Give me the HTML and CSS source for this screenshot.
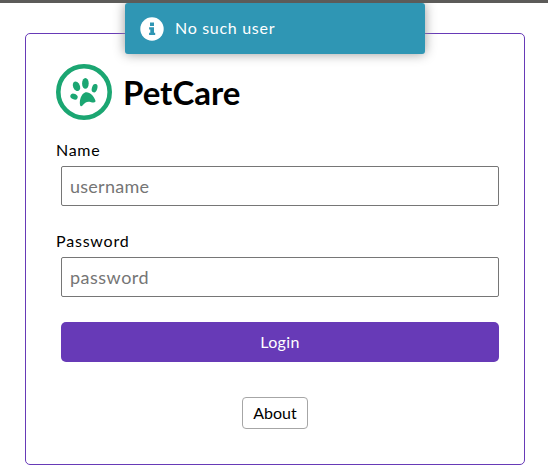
FILE: index.html
```html
<!DOCTYPE html>
<html lang="en">
<head>
<meta charset="utf-8">
<title>PetCare</title>
<link rel="stylesheet" href="styles.css">
</head>
<body>
<main class="card">
  <header class="brand">
    <svg class="logo" viewBox="0 0 56 56" aria-hidden="true">
      <circle cx="28" cy="28" r="25.7" fill="#fff" stroke="#1ba672" stroke-width="4.6"/>
      <g fill="#1ba672">
        <ellipse cx="20.5" cy="22.3" rx="3.4" ry="5" transform="rotate(-24 20.5 22.3)"/>
        <ellipse cx="29.4" cy="19.4" rx="3.3" ry="5.4"/>
        <ellipse cx="38.6" cy="24.2" rx="2.7" ry="4.3" transform="rotate(17 38.6 24.2)"/>
        <ellipse cx="18" cy="32.6" rx="2.8" ry="3.8" transform="rotate(-64 18 32.6)"/>
        <path d="M24 40.8C23.3 36 25.3 30 28.6 28.7C32.7 27 37.9 31.6 39.4 36.6C40 39.2 36.8 38.6 34.4 37.9C30.9 37.1 28.8 38.7 26.5 41.6C25.5 42.8 24.2 42.4 24 40.8Z"/>
      </g>
    </svg>
    <h1 class="title">PetCare</h1>
  </header>
  <form class="form">
    <label class="label" for="name">Name</label>
    <input class="input input-name" id="name" type="text" placeholder="username">
    <label class="label label-password" for="password">Password</label>
    <input class="input input-password" id="password" type="password" placeholder="password">
    <button class="login" type="button">Login</button>
  </form>
  <button class="about" type="button">About</button>
</main>
<div class="toast" role="status">
  <svg class="info" viewBox="0 0 24 24" aria-hidden="true">
    <circle cx="12" cy="12" r="11.7" fill="#fff"/>
    <path fill="#2f96b4" d="M10 5.4h4v3.5h-4zM9.1 10.2h4.9v5.6h1.2v2.2H9.1v-2.2h1.2v-3.4H9.1z"/>
  </svg>
  <span class="toast-text">No such user</span>
</div>
</body>
</html>
```

FILE: styles.css
```css
* { box-sizing: border-box; }

body {
  margin: 0;
  height: 475px;
  padding-top: 30px;
  border-top: 3px solid #5c5b59;
  background: #fff;
  color: #000;
  font-family: Lato, sans-serif;
  font-size: 16px;
  overflow: hidden;
}

.card {
  display: flex;
  flex-direction: column;
  width: 500px;
  height: 432px;
  margin-left: 25px;
  padding: 30px;
  border: 1px solid #673ab7;
  border-radius: 5px;
}

.brand {
  display: flex;
  align-items: center;
  gap: 11px;
  height: 56px;
}

.logo { width: 56px; height: 56px; }

.title {
  margin: 0;
  font-size: 33px;
  line-height: 40px;
  font-weight: 700;
}

.form {
  display: flex;
  flex-direction: column;
  margin-top: 20px;
}

.label { line-height: 20px; letter-spacing: 0.7px; }
.label-password { margin-top: 25px; letter-spacing: 0.8px; }

.input {
  width: 438px;
  height: 40px;
  margin: 6px 0 0 5px;
  padding: 0 8px;
  border: 1px solid #767676;
  border-radius: 2px;
  background: #fff;
  font: inherit;
  font-size: 18px;
}

.input::placeholder { color: #757575; }
.input-name { letter-spacing: 0.25px; }
.input-password { letter-spacing: 0.5px; }

.login {
  width: 438px;
  height: 40px;
  margin: 25px 0 0 5px;
  padding: 0 0 2px;
  border: 0;
  border-radius: 5px;
  background: #673ab7;
  color: #fff;
  font: inherit;
  letter-spacing: 0.3px;
}

.about {
  align-self: center;
  width: 66px;
  height: 32px;
  margin-top: 35px;
  padding: 0 0 2px;
  border: 1px solid #a6a6a6;
  border-radius: 4px;
  background: #fff;
  color: #000;
  font: inherit;
}

.toast {
  position: absolute;
  top: 3px;
  left: 125px;
  display: flex;
  align-items: center;
  gap: 11px;
  width: 300px;
  height: 51px;
  padding-left: 15px;
  border-radius: 3px;
  background: #2f96b4;
  color: #fff;
  box-shadow: 0 0 12px #999;
  clip-path: inset(0 -20px -20px -20px);
}

.info { width: 24px; height: 24px; }
.toast-text { padding-bottom: 2px; letter-spacing: 0.7px; }
```
